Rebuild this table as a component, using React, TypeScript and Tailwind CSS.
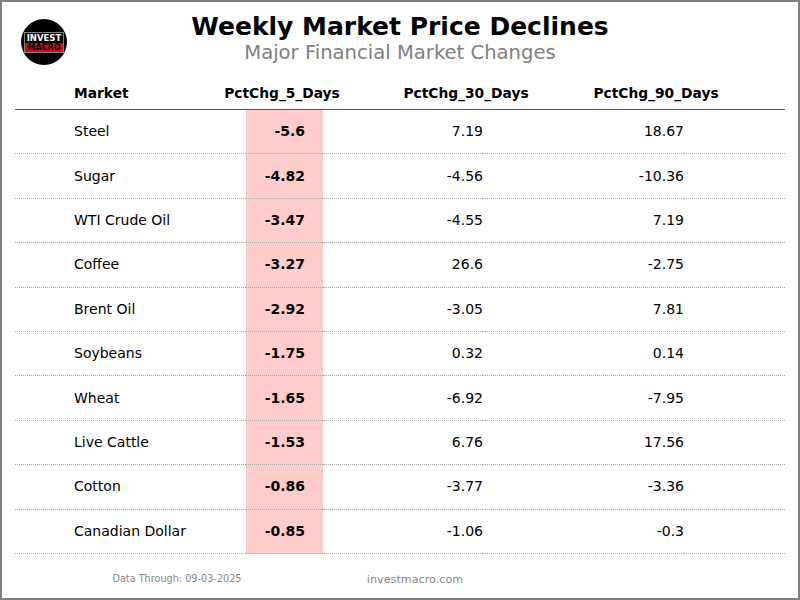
import React from 'react';

type Row = {
  market: string;
  d5: string;
  d30: string;
  d90: string;
};

const rows: Row[] = [
  { market: 'Steel', d5: '-5.6', d30: '7.19', d90: '18.67' },
  { market: 'Sugar', d5: '-4.82', d30: '-4.56', d90: '-10.36' },
  { market: 'WTI Crude Oil', d5: '-3.47', d30: '-4.55', d90: '7.19' },
  { market: 'Coffee', d5: '-3.27', d30: '26.6', d90: '-2.75' },
  { market: 'Brent Oil', d5: '-2.92', d30: '-3.05', d90: '7.81' },
  { market: 'Soybeans', d5: '-1.75', d30: '0.32', d90: '0.14' },
  { market: 'Wheat', d5: '-1.65', d30: '-6.92', d90: '-7.95' },
  { market: 'Live Cattle', d5: '-1.53', d30: '6.76', d90: '17.56' },
  { market: 'Cotton', d5: '-0.86', d30: '-3.77', d90: '-3.36' },
  { market: 'Canadian Dollar', d5: '-0.85', d30: '-1.06', d90: '-0.3' },
];

function Logo() {
  return (
    <div className="flex h-[46px] w-[46px] items-center justify-center rounded-full bg-black">
      <div className="flex w-[40px] flex-col items-center border border-white/50">
        <span className="text-[8.5px] font-bold leading-[10px] text-white">INVEST</span>
        <span className="w-full bg-[#c8101a] text-center text-[8px] font-bold leading-[9px] text-black">
          MACRO
        </span>
      </div>
    </div>
  );
}

const cell = 'flex h-[44.4px] items-center border-b border-dotted border-[#a8a8a8]';

export default function App() {
  return (
    <div
      className="h-[600px] w-[800px] border-2 border-[#808080] bg-white text-black"
      style={{ fontFamily: '"DejaVu Sans", Verdana, sans-serif' }}
    >
      {/* title block */}
      <div className="grid grid-cols-[1fr_auto_1fr] items-start">
        <div className="pl-[19px] pt-[17px]">
          <Logo />
        </div>
        <div className="flex flex-col items-center pt-[12px]">
          <h1 className="text-[25px] font-bold leading-none">Weekly Market Price Declines</h1>
          <p className="mt-[4px] text-[19.6px] leading-none text-[#808080]">Major Financial Market Changes</p>
        </div>
        <div />
      </div>

      {/* table */}
      <div className="ml-[13px] mt-[13px] w-[770px]">
        <div className="grid h-[32px] grid-cols-[207px_120px_248px_132px_63px] items-center border-b border-[#555] text-[13.8px] font-bold">
          <div className="pl-[59px]">Market</div>
          <div className="text-center">PctChg_5_Days</div>
          <div className="text-center">PctChg_30_Days</div>
          <div className="text-center">PctChg_90_Days</div>
          <div />
        </div>
        <div className="grid grid-cols-[231px_77px_160px_201px_101px] text-[14px]">
          {rows.map((r) => (
            <React.Fragment key={r.market}>
              <div className={`${cell} pl-[59px]`}>{r.market}</div>
              <div className={`${cell} justify-end bg-[#ffcccc] pr-[18px] font-bold`}>{r.d5}</div>
              <div className={`${cell} justify-end`}>{r.d30}</div>
              <div className={`${cell} justify-end`}>{r.d90}</div>
              <div className={cell} />
            </React.Fragment>
          ))}
        </div>
      </div>

      {/* footer */}
      <div className="mt-[20px] flex items-start text-[#888]">
        <div className="ml-[75px] w-[200px] text-center text-[9.7px] leading-none">Data Through: 09-03-2025</div>
        <div className="ml-[38px] w-[200px] text-center text-[11.2px] leading-none">investmacro.com</div>
      </div>
    </div>
  );
}
